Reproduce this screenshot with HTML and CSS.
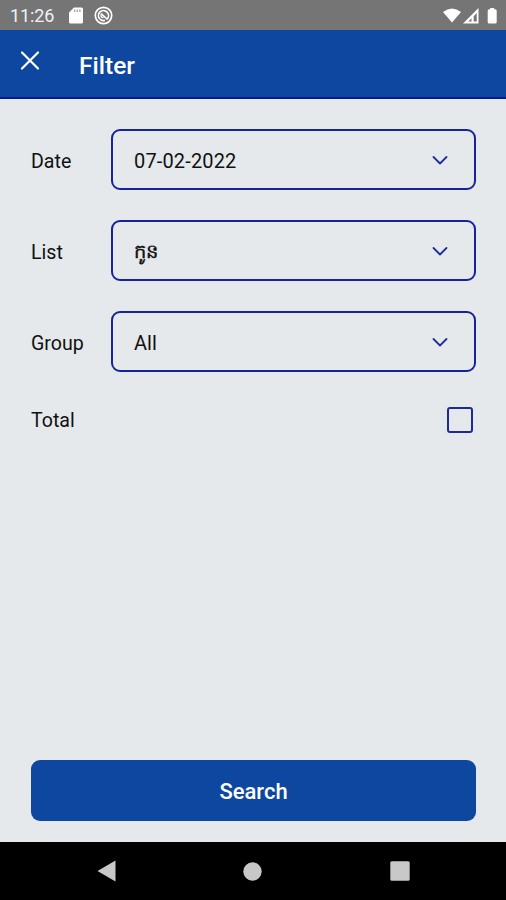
FILE: index.html
```html
<!DOCTYPE html>
<html lang="en">
<head>
<meta charset="utf-8">
<title>Filter</title>
<link rel="stylesheet" href="styles.css">
</head>
<body>
<div class="screen">
  <div class="status">
    <span class="clock">11:26</span>
    <svg class="sd" width="14" height="17" viewBox="0 0 14 17"><path fill="#fff" d="M5 .5h7.500q1.500 0 1.500 1.500v13q0 1.500-1.500 1.500h-11Q0 16.500 0 15V5.500z"/><path stroke="#999" stroke-width="1.200" d="M5.700 2.500v2.500M8.300 2.500v2.500M10.900 2.500v2.500"/></svg>
    <svg class="ring" width="19" height="19" viewBox="0 0 19 19" fill="none" stroke="#fff"><circle cx="9.500" cy="9.500" r="8.200" stroke-width="1.700"/><path stroke-width="1.700" d="M5.900 13A5 5 0 1 1 13 13.100M6 13.100q2 2 5 1.200M7 7.500l6.500 6"/><path stroke-width="1.300" d="M7 8.500q-.5 3 2.500 3"/></svg>
    <svg class="signals" width="56" height="18" viewBox="0 0 56 18"><path fill="#fff" d="M1 5Q10-2 19 5L10 15.500z"/><path fill="#fff" fill-rule="evenodd" d="M36.500 1v15.500H21zM34.700 6v8.500h-3V9.200zM29.500 11.300v3.200h-3.200z"/><path fill="#fff" d="M48.200 2.300V1h4v1.300h1q1.500 0 1.500 1.500v11.200q0 1.500-1.500 1.500h-6Q45.700 16.500 45.700 15V3.800q0-1.500 1.500-1.500z"/></svg>
  </div>
  <header class="header">
    <svg class="close" width="20" height="20" viewBox="0 0 20 20"><path d="M2 1.500l16 16M18 1.500l-16 16" stroke="#fff" stroke-width="2.200" stroke-linecap="round"/></svg>
    <h1 class="title">Filter</h1>
  </header>
  <main class="content">
    <div class="row"><span class="label">Date</span><div class="select"><span class="date">07-02-2022</span><svg class="chevron" width="16" height="10" viewBox="0 0 16 10"><path d="M1.500 1L8 7.500 14.500 1"/></svg></div></div>
    <div class="row"><span class="label">List</span><div class="select"><span class="khmer" lang="km">កូន</span><svg class="chevron" width="16" height="10" viewBox="0 0 16 10"><path d="M1.500 1L8 7.500 14.500 1"/></svg></div></div>
    <div class="row"><span class="label">Group</span><div class="select"><span>All</span><svg class="chevron" width="16" height="10" viewBox="0 0 16 10"><path d="M1.500 1L8 7.500 14.500 1"/></svg></div></div>
    <div class="total"><span class="label">Total</span><span class="checkbox"></span></div>
    <button class="search">Search</button>
  </main>
  <nav class="nav">
    <svg width="19" height="22" viewBox="0 0 19 22"><path fill="#c8c8c8" d="M18.500.5v21L.5 11z"/></svg>
    <svg width="19" height="19" viewBox="0 0 19 19"><circle cx="9.500" cy="9.500" r="9.200" fill="#c8c8c8"/></svg>
    <svg width="20" height="20" viewBox="0 0 20 20"><rect x=".3" y=".3" width="19.400" height="19.400" rx="1.500" fill="#c8c8c8"/></svg>
  </nav>
</div>
</body>
</html>
```
FILE: styles.css
```css
* { box-sizing: border-box; }
body { margin: 0; font-family: Roboto, "Noto Sans", sans-serif; color: #111; }
.screen { width: 506px; height: 900px; display: flex; flex-direction: column; background: #e5e9ec; overflow: hidden; }
.status { height: 30px; flex: none; background: #757575; display: flex; align-items: center; padding: 1px 8px 0 10px; color: #fff; }
.clock { font-size: 18px; width: 59px; color: #f1f1f1; letter-spacing: -0.1px; }
.ring { margin-left: 11px; }
.signals { margin-left: auto; }
.header { height: 69px; flex: none; background: #0e479f; border-bottom: 2px solid #0b1793; display: flex; padding: 0 20px; }
.close { margin-top: 21px; }
.title { margin: 20px 0 0 39px; font-size: 24.500px; line-height: 32px; font-weight: 500; color: #fff; }
.content { flex: 1; display: flex; flex-direction: column; padding: 30px 30px 21px 31px; }
.row { display: flex; align-items: center; height: 61px; margin-bottom: 30px; }
.label { width: 80px; font-size: 19.600px; line-height: 26px; padding-top: 2px; }
.row .label { padding-top: 4px; }
.select { flex: 1; height: 61px; border: 2px solid #17239a; border-radius: 9px; display: flex; align-items: center; justify-content: space-between; padding: 2px 26px 0 21px; font-size: 20px; line-height: 26px; }
.date { letter-spacing: 0.150px; }
.khmer { font-size: 19.500px; -webkit-text-stroke: 0.400px #111; }
.chevron { fill: none; stroke: #1c309b; stroke-width: 1.800; stroke-linecap: round; stroke-linejoin: round; }
.total { display: flex; align-items: center; justify-content: space-between; height: 26px; margin-top: 5px; padding-right: 3px; }
.checkbox { width: 26px; height: 26px; border: 2px solid #1d2a9c; border-radius: 3px; }
.search { margin-top: auto; height: 61px; border: 0; border-radius: 9px; background: #0e479f; color: #fff; font: 500 22px/28px Roboto, sans-serif; padding: 2px 0 0; }
.nav { height: 58px; flex: none; background: #000; display: flex; align-items: center; justify-content: space-between; padding: 0 96.500px; }
```
